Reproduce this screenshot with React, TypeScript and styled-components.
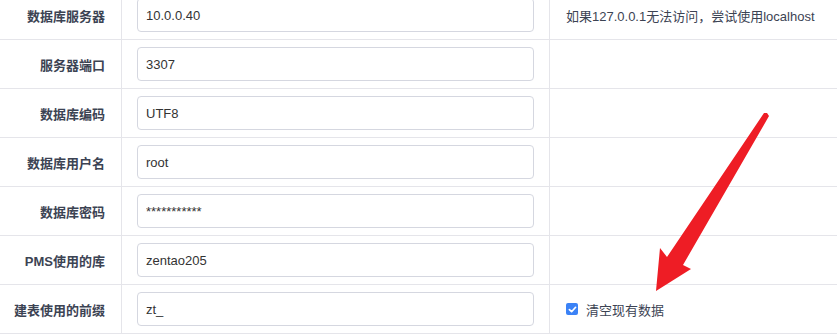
import React from "react";
import styled, { createGlobalStyle } from "styled-components";

const GlobalStyle = createGlobalStyle`
  html, body {
    margin: 0;
    padding: 0;
    background: #fff;
  }
  body {
    font-family: "Liberation Sans", "Noto Sans CJK SC", sans-serif;
    font-size: 13px;
    color: #3c4353;
  }
`;

type Field = {
  label: string;
  value: string;
  tip?: string;
  clearBox?: boolean;
};

const fields: Field[] = [
  { label: "数据库服务器", value: "10.0.0.40", tip: "如果127.0.0.1无法访问，尝试使用localhost" },
  { label: "服务器端口", value: "3307" },
  { label: "数据库编码", value: "UTF8" },
  { label: "数据库用户名", value: "root" },
  { label: "数据库密码", value: "***********" },
  { label: "PMS使用的库", value: "zentao205" },
  { label: "建表使用的前缀", value: "zt_", clearBox: true },
];

export default function App() {
  return (
    <>
      <GlobalStyle />
      <Page>
        <FormTable>
          {fields.map((f) => (
            <Row key={f.label}>
              <LabelCell>{f.label}</LabelCell>
              <InputCell>
                <TextInput defaultValue={f.value} readOnly />
              </InputCell>
              <TipCell>
                {f.tip}
                {f.clearBox && (
                  <CheckLabel>
                    <CheckBox>
                      <svg width="9" height="9" viewBox="0 0 9 9">
                        <path
                          d="M1.4 4.6 L3.6 6.7 L7.6 2.3"
                          fill="none"
                          stroke="#fff"
                          strokeWidth="1.7"
                          strokeLinecap="round"
                          strokeLinejoin="round"
                        />
                      </svg>
                    </CheckBox>
                    清空现有数据
                  </CheckLabel>
                )}
              </TipCell>
            </Row>
          ))}
        </FormTable>
        <ArrowMark width="837" height="334" viewBox="0 0 837 334">
          <polygon
            points="764,113 767,113 769,116 683,265 691,269 656,291 660,248 667,257"
            fill="#ee1d25"
          />
        </ArrowMark>
      </Page>
    </>
  );
}

const Page = styled.div`
  position: relative;
  width: 837px;
  height: 334px;
  overflow: hidden;
`;

const FormTable = styled.div`
  margin-top: -10px;
  border-top: 1px solid #e5e5ea;
`;

const Row = styled.div`
  display: grid;
  grid-template-columns: 122px 428px 1fr;
  height: 49px;
  box-sizing: border-box;
  border-bottom: 1px solid #e5e5ea;
`;

const LabelCell = styled.div`
  display: flex;
  align-items: center;
  justify-content: flex-end;
  padding-right: 16px;
  border-right: 1px solid #e5e5ea;
  font-weight: bold;
  color: #3c4353;
`;

const InputCell = styled.div`
  display: flex;
  align-items: center;
  padding: 0 15px;
  border-right: 1px solid #e5e5ea;
`;

const TextInput = styled.input`
  width: 100%;
  height: 34px;
  box-sizing: border-box;
  padding: 0 8px;
  border: 1px solid #d5d7e0;
  border-radius: 4px;
  font-family: inherit;
  font-size: 13px;
  color: #333;
  background: #fff;
  outline: none;
`;

const TipCell = styled.div`
  display: flex;
  align-items: center;
  padding-left: 16px;
  color: #3c4353;
  white-space: nowrap;
`;

const CheckLabel = styled.label`
  display: flex;
  align-items: center;
  gap: 8px;
`;

const CheckBox = styled.span`
  display: inline-flex;
  align-items: center;
  justify-content: center;
  width: 12px;
  height: 12px;
  border-radius: 2px;
  background: #3b82f6;
`;

const ArrowMark = styled.svg`
  position: absolute;
  top: 0;
  left: 0;
  pointer-events: none;
`;
